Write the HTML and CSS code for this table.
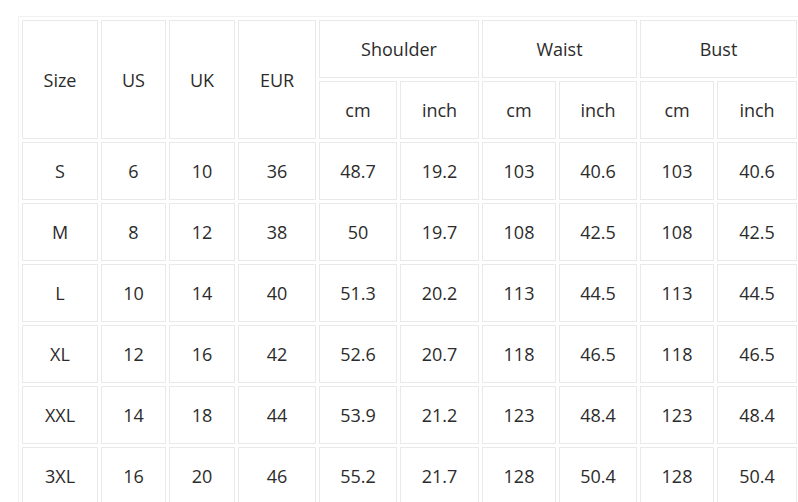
FILE: index.html
```
<!DOCTYPE html>
<html>
<head>
<meta charset="utf-8">
<link rel="stylesheet" href="styles.css">
</head>
<body>
<table class="size-table">
  <colgroup>
    <col class="c-size"><col class="c-us"><col class="c-uk"><col class="c-eur">
    <col class="c-scm"><col class="c-sin"><col class="c-wcm"><col class="c-win"><col class="c-bcm"><col class="c-bin">
  </colgroup>
  <tr class="hrow">
    <td rowspan="2">Size</td><td rowspan="2">US</td><td rowspan="2">UK</td><td rowspan="2">EUR</td>
    <td colspan="2">Shoulder</td><td colspan="2">Waist</td><td colspan="2">Bust</td>
  </tr>
  <tr class="hrow">
    <td>cm</td><td>inch</td><td>cm</td><td>inch</td><td>cm</td><td>inch</td>
  </tr>
  <tr><td>S</td><td>6</td><td>10</td><td>36</td><td>48.7</td><td>19.2</td><td>103</td><td>40.6</td><td>103</td><td>40.6</td></tr>
  <tr><td>M</td><td>8</td><td>12</td><td>38</td><td>50</td><td>19.7</td><td>108</td><td>42.5</td><td>108</td><td>42.5</td></tr>
  <tr><td>L</td><td>10</td><td>14</td><td>40</td><td>51.3</td><td>20.2</td><td>113</td><td>44.5</td><td>113</td><td>44.5</td></tr>
  <tr><td>XL</td><td>12</td><td>16</td><td>42</td><td>52.6</td><td>20.7</td><td>118</td><td>46.5</td><td>118</td><td>46.5</td></tr>
  <tr><td>XXL</td><td>14</td><td>18</td><td>44</td><td>53.9</td><td>21.2</td><td>123</td><td>48.4</td><td>123</td><td>48.4</td></tr>
  <tr><td>3XL</td><td>16</td><td>20</td><td>46</td><td>55.2</td><td>21.7</td><td>128</td><td>50.4</td><td>128</td><td>50.4</td></tr>
</table>
</body>
</html>
```
FILE: styles.css
```
html, body {
  margin: 0;
  padding: 0;
  background: #ffffff;
  overflow: hidden;
}
body {
  padding: 16px 0 0 18px;
  font-family: "Open Sans", "Noto Sans", sans-serif;
  font-size: 18px;
  color: #2b2b2b;
}
.size-table {
  border-collapse: separate;
  border-spacing: 3px;
  border: 1px solid #f1f1f1;
  table-layout: fixed;
  width: 781px;
}
.size-table td {
  border: 1px solid #e9e9e9;
  height: 58px;
  padding: 0;
  text-align: center;
  vertical-align: middle;
  box-sizing: border-box;
  white-space: nowrap;
}
.c-size { width: 76px; }
.c-us { width: 65px; }
.c-uk { width: 66px; }
.c-eur { width: 78px; }
.c-scm { width: 78px; }
.c-sin { width: 79px; }
.c-wcm { width: 74px; }
.c-win { width: 78px; }
.c-bcm { width: 74px; }
.c-bin { width: 80px; }
```
